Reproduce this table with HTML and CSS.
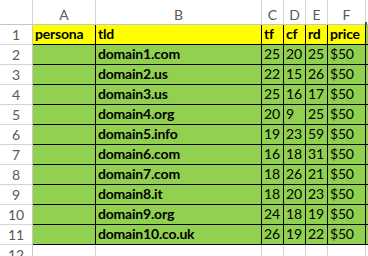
FILE: index.html
```html
<!DOCTYPE html>
<html>
<head>
<meta charset="utf-8">
<link rel="stylesheet" href="styles.css">
</head>
<body>
<div class="sheet">
  <div class="ch corner"></div>
  <div class="ch">A</div>
  <div class="ch">B</div>
  <div class="ch">C</div>
  <div class="ch">D</div>
  <div class="ch">E</div>
  <div class="ch">F</div>
  <div class="ch last"></div>

  <div class="rh">1</div>
  <div class="c y b">persona</div>
  <div class="c y b">tld</div>
  <div class="c y b">tf</div>
  <div class="c y b">cf</div>
  <div class="c y b">rd</div>
  <div class="c y b">price</div>
  <div class="c g x"></div>

  <div class="rh">2</div>
  <div class="c g"></div>
  <div class="c g b">domain1.com</div>
  <div class="c g">25</div>
  <div class="c g">20</div>
  <div class="c g">25</div>
  <div class="c g">$50</div>
  <div class="c g x"></div>

  <div class="rh">3</div>
  <div class="c g"></div>
  <div class="c g b">domain2.us</div>
  <div class="c g">22</div>
  <div class="c g">15</div>
  <div class="c g">26</div>
  <div class="c g">$50</div>
  <div class="c g x"></div>

  <div class="rh">4</div>
  <div class="c g"></div>
  <div class="c g b">domain3.us</div>
  <div class="c g">25</div>
  <div class="c g">16</div>
  <div class="c g">17</div>
  <div class="c g">$50</div>
  <div class="c g x"></div>

  <div class="rh">5</div>
  <div class="c g"></div>
  <div class="c g b">domain4.org</div>
  <div class="c g">20</div>
  <div class="c g">9</div>
  <div class="c g">25</div>
  <div class="c g">$50</div>
  <div class="c g x"></div>

  <div class="rh">6</div>
  <div class="c g"></div>
  <div class="c g b">domain5.info</div>
  <div class="c g">19</div>
  <div class="c g">23</div>
  <div class="c g">59</div>
  <div class="c g">$50</div>
  <div class="c g x"></div>

  <div class="rh">7</div>
  <div class="c g"></div>
  <div class="c g b">domain6.com</div>
  <div class="c g">16</div>
  <div class="c g">18</div>
  <div class="c g">31</div>
  <div class="c g">$50</div>
  <div class="c g x"></div>

  <div class="rh">8</div>
  <div class="c g"></div>
  <div class="c g b">domain7.com</div>
  <div class="c g">18</div>
  <div class="c g">26</div>
  <div class="c g">21</div>
  <div class="c g">$50</div>
  <div class="c g x"></div>

  <div class="rh">9</div>
  <div class="c g"></div>
  <div class="c g b">domain8.it</div>
  <div class="c g">18</div>
  <div class="c g">20</div>
  <div class="c g">23</div>
  <div class="c g">$50</div>
  <div class="c g x"></div>

  <div class="rh">10</div>
  <div class="c g"></div>
  <div class="c g b">domain9.org</div>
  <div class="c g">24</div>
  <div class="c g">18</div>
  <div class="c g">19</div>
  <div class="c g">$50</div>
  <div class="c g x"></div>

  <div class="rh">11</div>
  <div class="c g"></div>
  <div class="c g b">domain10.co.uk</div>
  <div class="c g">26</div>
  <div class="c g">19</div>
  <div class="c g">22</div>
  <div class="c g">$50</div>
  <div class="c g x"></div>

  <div class="rh">12</div>
  <div class="c w"></div>
  <div class="c w"></div>
  <div class="c w"></div>
  <div class="c w"></div>
  <div class="c w"></div>
  <div class="c w"></div>
  <div class="c w"></div>
</div>
</body>
</html>
```

FILE: styles.css
```css
html, body {
  margin: 0;
  padding: 0;
  background: #ffffff;
}
body {
  width: 368px;
  height: 256px;
  overflow: hidden;
  font-family: Lato, "Liberation Sans", sans-serif;
  font-size: 14px;
  color: #000;
}
.sheet {
  display: grid;
  grid-template-columns: 33px 63px 166px 22px 22px 22px 38px 1fr;
  grid-template-rows: 25px repeat(12, 20px);
}
.ch {
  box-sizing: border-box;
  border-right: 1px solid #d4d4d4;
  border-bottom: 1px solid #c6c6c6;
  display: flex;
  align-items: center;
  justify-content: center;
  padding-top: 5px;
  color: #595959;
  font-size: 14px;
  position: relative;
}
.ch.last::after {
  content: "";
  position: absolute;
  left: -1px;
  bottom: -1px;
  width: 2px;
  height: 3px;
  background: #217346;
}
.rh {
  box-sizing: border-box;
  border-right: 1px solid #c6c6c6;
  border-bottom: 1px solid #d4d4d4;
  display: flex;
  align-items: center;
  justify-content: center;
  color: #595959;
  font-size: 14px;
}
.c {
  box-sizing: border-box;
  border-right: 1px solid #000;
  border-bottom: 1px solid #000;
  padding: 0 0 3px 2px;
  display: flex;
  align-items: flex-end;
  line-height: 15px;
  white-space: nowrap;
  overflow: visible;
  letter-spacing: -0.2px;
}
.y { background: #ffff00; }
.g { background: #92d050; }
.b { font-weight: bold; }
.x { border-right: none; }
.w {
  border-right: 1px solid #d4d4d4;
  border-bottom: none;
}
```
